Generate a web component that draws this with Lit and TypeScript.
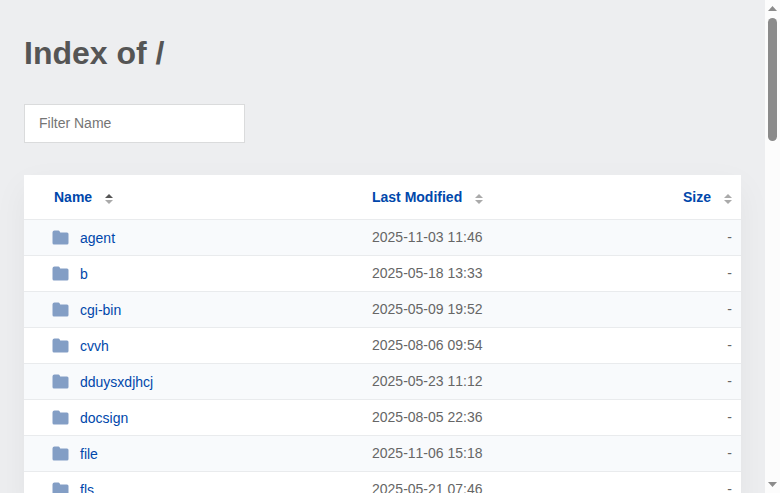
import { LitElement, html, css, svg } from "lit";
import { customElement, state } from "lit/decorators.js";

type Entry = { name: string; modified: string };
type SortKey = "name" | "modified" | "size";

const ENTRIES: Entry[] = [
  { name: "agent", modified: "2025-11-03 11:46" },
  { name: "b", modified: "2025-05-18 13:33" },
  { name: "cgi-bin", modified: "2025-05-09 19:52" },
  { name: "cvvh", modified: "2025-08-06 09:54" },
  { name: "dduysxdjhcj", modified: "2025-05-23 11:12" },
  { name: "docsign", modified: "2025-08-05 22:36" },
  { name: "file", modified: "2025-11-06 15:18" },
  { name: "fls", modified: "2025-05-21 07:46" },
];

const COLUMNS: { key: SortKey; label: string }[] = [
  { key: "name", label: "Name" },
  { key: "modified", label: "Last Modified" },
  { key: "size", label: "Size" },
];

const folder = svg`<path d="M2.5 .5H6.4Q7.2 .5 7.6 1.2L8.2 2.5H15Q16.5 2.5 16.5 4V13Q16.5 14.5 15 14.5H2Q.5 14.5 .5 13V2.5Q.5 .5 2.5 .5Z"/>`;

@customElement("app-root")
export class AppRoot extends LitElement {
  @state() private filter = "";
  @state() private sortKey: SortKey = "name";
  @state() private descending = false;

  static styles = css`
    :host {
      display: grid;
      grid-template-columns: minmax(0, 1fr) 15px;
      height: 100vh;
      overflow: hidden;
      background: #edeef0;
      color: #666;
      font: 14px/20px "Liberation Sans", Arial, sans-serif;
      font-kerning: none;
    }
    main {
      padding: 32px 24px;
      min-height: 0;
      overflow: hidden;
    }
    h1 {
      margin: 0 0 30px;
      color: #555;
      font-size: 32px;
      line-height: 42px;
    }
    .filter {
      display: block;
      box-sizing: border-box;
      width: 221px;
      height: 39px;
      margin-bottom: 32px;
      padding: 0 14px 2px;
      border: 1px solid #dadbdc;
      border-radius: 0;
      background: #fff;
      color: #555;
      font: inherit;
      outline: none;
    }
    .filter::placeholder {
      color: #757575;
      opacity: 1;
    }
    table {
      width: 100%;
      table-layout: fixed;
      border-collapse: separate;
      border-spacing: 0;
      background: #fff;
      box-shadow: 0 12px 32px rgba(0, 30, 20, 0.05);
    }
    .col-name {
      width: 47%;
    }
    th,
    td {
      box-sizing: border-box;
      height: 36px;
      padding: 0 9px 2px 11px;
      border-bottom: 1px solid #e9ebed;
      text-align: left;
    }
    th {
      height: 45px;
      padding-bottom: 0;
    }
    th:first-child {
      padding-left: 30px;
    }
    td:first-child {
      padding: 0 9px 0 28px;
    }
    th:last-child,
    td:last-child {
      text-align: right;
    }
    tbody tr:nth-child(odd) {
      background: #f8fafc;
    }
    .sort {
      display: inline-flex;
      align-items: center;
      gap: 13px;
      padding: 0;
      border: 0;
      background: none;
      color: #0047ab;
      font: inherit;
      font-weight: bold;
      cursor: pointer;
    }
    .arrows {
      width: 8px;
      height: 10px;
      margin-top: 4px;
      fill: #aaa;
    }
    .arrows .active {
      fill: #555;
    }
    .entry {
      display: flex;
      align-items: center;
      gap: 11px;
      color: #0047ab;
      text-decoration: none;
    }
    .folder {
      width: 17px;
      height: 15px;
      fill: #839ec5;
    }
    .scrollbar {
      display: flex;
      flex-direction: column;
      align-items: center;
      gap: 6px;
      padding: 6px 0;
      box-sizing: border-box;
      background: #fcfcfc;
      fill: #8b8b8b;
    }
    .scrollbar svg {
      width: 9px;
      height: 6px;
      flex: none;
    }
    .track {
      flex: 1;
      width: 9px;
    }
    .thumb {
      height: 27%;
      border-radius: 5px;
      background: #8b8b8b;
    }
  `;

  private sortBy(key: SortKey) {
    this.descending = this.sortKey === key && !this.descending;
    this.sortKey = key;
  }

  private get rows(): Entry[] {
    const needle = this.filter.toLowerCase();
    const direction = this.descending ? -1 : 1;
    const field = this.sortKey === "modified" ? "modified" : "name";
    return ENTRIES.filter((e) => e.name.toLowerCase().includes(needle)).sort(
      (a, b) => direction * a[field].localeCompare(b[field])
    );
  }

  private header(key: SortKey, label: string) {
    const active = this.sortKey === key;
    return html`<th scope="col">
      <button class="sort" @click=${() => this.sortBy(key)}>
        ${label}
        <svg class="arrows" viewBox="0 0 8 10" aria-hidden="true">
          <path class=${active && !this.descending ? "active" : ""} d="M0 4 4 0 8 4Z" />
          <path class=${active && this.descending ? "active" : ""} d="M0 6H8L4 10Z" />
        </svg>
      </button>
    </th>`;
  }

  render() {
    return html`
      <main>
        <h1>Index of /</h1>
        <input
          class="filter"
          type="text"
          placeholder="Filter Name"
          aria-label="Filter Name"
          @input=${(e: Event) => (this.filter = (e.target as HTMLInputElement).value)}
        />
        <table>
          <colgroup>
            <col class="col-name" />
            <col />
            <col />
          </colgroup>
          <thead>
            <tr>
              ${COLUMNS.map((c) => this.header(c.key, c.label))}
            </tr>
          </thead>
          <tbody>
            ${this.rows.map(
              (e) => html`<tr>
                <td>
                  <a class="entry" href="#${e.name}">
                    <svg class="folder" viewBox="0 0 17 15" aria-hidden="true">${folder}</svg>
                    ${e.name}
                  </a>
                </td>
                <td>${e.modified}</td>
                <td>-</td>
              </tr>`
            )}
          </tbody>
        </table>
      </main>
      <div class="scrollbar" aria-hidden="true">
        <svg viewBox="0 0 9 6"><path d="M0 5 4.5 0 9 5Z" /></svg>
        <div class="track"><div class="thumb"></div></div>
        <svg viewBox="0 0 9 6"><path d="M0 1H9L4.5 6Z" /></svg>
      </div>
    `;
  }
}
